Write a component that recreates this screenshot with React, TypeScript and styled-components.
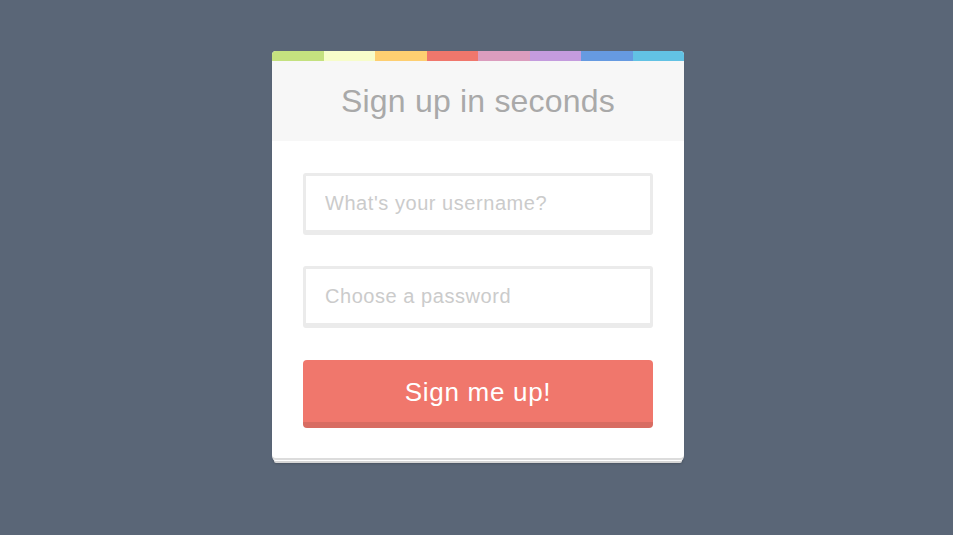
import React from 'react';
import styled, { createGlobalStyle } from 'styled-components';

const GlobalStyle = createGlobalStyle`
  html, body {
    margin: 0;
    padding: 0;
    background: #5a6677;
    font-family: 'Liberation Sans', Arial, sans-serif;
  }
  * { box-sizing: border-box; }
`;

const Page = styled.div`
  min-height: 535px;
  padding: 51px 0 0 272px;
`;

const Card = styled.form`
  width: 412px;
  background: #fff;
  border-radius: 4px;
  overflow: hidden;
  box-shadow:
    0 2px 0 #dcdcdc,
    0 4px 0 -1px #fff,
    0 7px 0 -2px #d6d6d6,
    0 7px 3px -2px rgba(0, 0, 0, 0.35);
  margin-bottom: 8px;
`;

const colors = ['#c4e17f', '#f7fdca', '#fecf71', '#f0776c', '#db9dbe', '#c49cde', '#669ae1', '#62c2e4'];

const ColorBar = styled.div`
  display: flex;
  height: 10px;
`;

const Stripe = styled.div<{ $color: string }>`
  flex: 1;
  background: ${p => p.$color};
`;

const Header = styled.div`
  background: #f7f7f7;
  height: 80px;
  display: flex;
  align-items: center;
  justify-content: center;
`;

const Title = styled.h1`
  margin: 0;
  font-size: 32px;
  font-weight: 400;
  letter-spacing: 0.2px;
  color: #a9a9a9;
`;

const Body = styled.div`
  padding: 32px 31px 30px;
  display: flex;
  flex-direction: column;
  gap: 31px;
`;

const Field = styled.input`
  width: 100%;
  height: 62px;
  border: 3px solid #ebebeb;
  border-bottom-width: 5px;
  border-radius: 3px;
  padding: 0 19px;
  font-family: inherit;
  font-size: 20px;
  letter-spacing: 0.55px;
  color: #555;
  outline: none;

  &::placeholder {
    color: #cbcbcb;
  }
`;

const Button = styled.button`
  height: 68px;
  margin-top: 1px;
  border: none;
  border-bottom: 6px solid #d86c62;
  border-radius: 4px;
  background: #f0776c;
  color: #fff;
  font-family: inherit;
  font-size: 26px;
  letter-spacing: 0.7px;
  padding-top: 4px;
  cursor: pointer;
`;

export default function App() {
  return (
    <Page>
      <GlobalStyle />
      <Card onSubmit={e => e.preventDefault()}>
        <ColorBar>
          {colors.map(c => (
            <Stripe key={c} $color={c} />
          ))}
        </ColorBar>
        <Header>
          <Title>Sign up in seconds</Title>
        </Header>
        <Body>
          <Field type="text" placeholder="What's your username?" />
          <Field type="password" placeholder="Choose a password" />
          <Button type="submit">Sign me up!</Button>
        </Body>
      </Card>
    </Page>
  );
}
